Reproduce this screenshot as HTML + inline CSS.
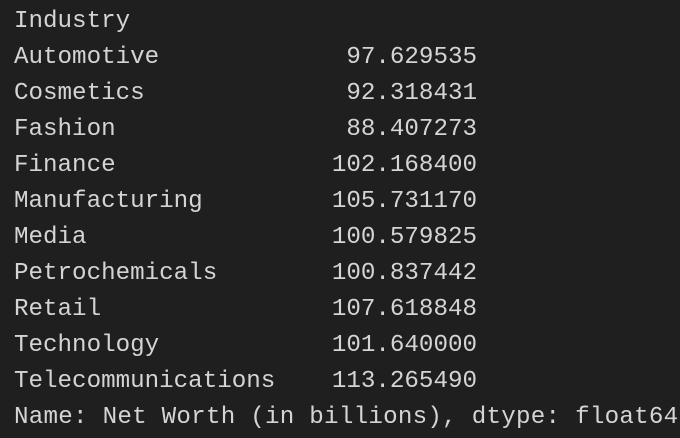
<!DOCTYPE html>
<html><head><style>
html,body{margin:0;padding:0;background:#1f1f1f;width:680px;height:438px;overflow:hidden;position:relative}
.r{position:absolute;left:14px;height:36px;line-height:36px;font-family:"Liberation Mono",monospace;font-size:24.2px;color:#d4d4d4;white-space:pre}
.n{position:absolute;left:14px;width:463px;text-align:right}
.last{letter-spacing:0.25px}
</style></head><body>
<div class="r" style="top:4px">Industry</div>
<div class="r" style="top:40px">Automotive</div><div class="r n" style="top:40px">97.629535</div>
<div class="r" style="top:76px">Cosmetics</div><div class="r n" style="top:76px">92.318431</div>
<div class="r" style="top:112px">Fashion</div><div class="r n" style="top:112px">88.407273</div>
<div class="r" style="top:148px">Finance</div><div class="r n" style="top:148px">102.168400</div>
<div class="r" style="top:184px">Manufacturing</div><div class="r n" style="top:184px">105.731170</div>
<div class="r" style="top:220px">Media</div><div class="r n" style="top:220px">100.579825</div>
<div class="r" style="top:256px">Petrochemicals</div><div class="r n" style="top:256px">100.837442</div>
<div class="r" style="top:292px">Retail</div><div class="r n" style="top:292px">107.618848</div>
<div class="r" style="top:328px">Technology</div><div class="r n" style="top:328px">101.640000</div>
<div class="r" style="top:364px">Telecommunications</div><div class="r n" style="top:364px">113.265490</div>
<div class="r last" style="top:400px">Name: Net Worth (in billions), dtype: float64</div>
</body></html>
